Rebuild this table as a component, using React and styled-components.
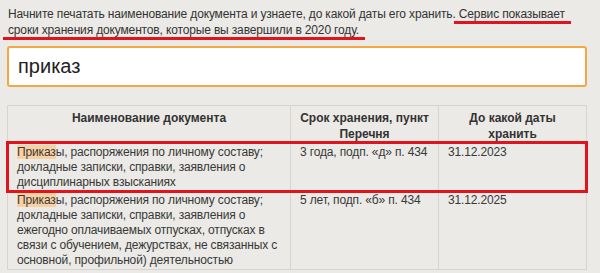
import React from "react";
import styled, { createGlobalStyle } from "styled-components";

const Global = createGlobalStyle`
  html, body { margin: 0; padding: 0; }
  body {
    background: #ebeae6;
    font-family: "Liberation Sans", Arial, sans-serif;
    color: #333;
    overflow: hidden;
  }
`;

const Page = styled.div`
  width: 600px;
  height: 273px;
  padding: 6px 13px 0 7px;
  box-sizing: border-box;
`;

const Intro = styled.p`
  margin: 0 0 8px 1px;
  font-size: 12px;
  line-height: 16px;
  letter-spacing: -0.15px;
  color: #333;
`;

const Marked = styled.span`
  border-bottom: 3px solid #e0141c;
  padding: 0 6px 0 5px;
  margin: 0 -6px 0 -5px;
  -webkit-box-decoration-break: clone;
  box-decoration-break: clone;
`;

const SearchBox = styled.div`
  height: 41px;
  box-sizing: border-box;
  background: #fff;
  border: 2px solid #f2a843;
  border-radius: 3px;
  display: flex;
  align-items: center;
  padding: 0 9px;
  font-size: 20px;
  color: #222;
`;

const Table = styled.div`
  margin-top: 18px;
  border: 1px solid #d6d5d1;
  border-bottom: none;
  font-size: 12px;
`;

const Row = styled.div`
  display: grid;
  grid-template-columns: 283px 148px 1fr;
  border-bottom: 1px solid #d6d5d1;
  position: relative;
  ${(p) =>
    p.$marked &&
    `
    outline: 3px solid #e0141c;
    outline-offset: -1px;
    z-index: 1;
  `}
`;

const HeadCell = styled.div`
  padding: 4px 9px 0;
  line-height: 16px;
  font-weight: bold;
  text-align: center;
  color: #333;
  border-right: 1px solid #d6d5d1;
  &:last-child { border-right: none; }
`;

const Cell = styled.div`
  padding: 2px 8px 0 9px;
  line-height: 15px;
  letter-spacing: -0.15px;
  color: #383838;
  border-right: 1px solid #d6d5d1;
  &:last-child { border-right: none; }
`;

const Hit = styled.span`
  background: #f9d0a3;
`;

const rows = [
  {
    rest:
      "ы, распоряжения по личному составу; докладные записки, справки, заявления о дисциплинарных взысканиях",
    term: "3 года, подп. «д» п. 434",
    date: "31.12.2023",
    marked: true,
    height: 47,
  },
  {
    rest:
      "ы, распоряжения по личному составу; докладные записки, справки, заявления о ежегодно оплачиваемых отпусках, отпусках в связи с обучением, дежурствах, не связанных с основной, профильной) деятельностью",
    term: "5 лет, подп. «б» п. 434",
    date: "31.12.2025",
    height: 78,
  },
];

export default function App() {
  return (
    <Page>
      <Global />
      <Intro>
        Начните печатать наименование документа и узнаете, до какой даты его
        хранить.{" "}
        <Marked>
          Сервис показывает сроки хранения документов, которые вы завершили в
          2020 году.
        </Marked>
      </Intro>
      <SearchBox>приказ</SearchBox>
      <Table>
        <Row>
          <HeadCell>Наименование документа</HeadCell>
          <HeadCell>Срок хранения, пункт Перечня</HeadCell>
          <HeadCell>До какой даты хранить</HeadCell>
        </Row>
        {rows.map((r, i) => (
          <Row key={i} $marked={r.marked} style={{ minHeight: r.height }}>
            <Cell>
              <Hit>Приказ</Hit>
              {r.rest}
            </Cell>
            <Cell>{r.term}</Cell>
            <Cell>{r.date}</Cell>
          </Row>
        ))}
      </Table>
    </Page>
  );
}
